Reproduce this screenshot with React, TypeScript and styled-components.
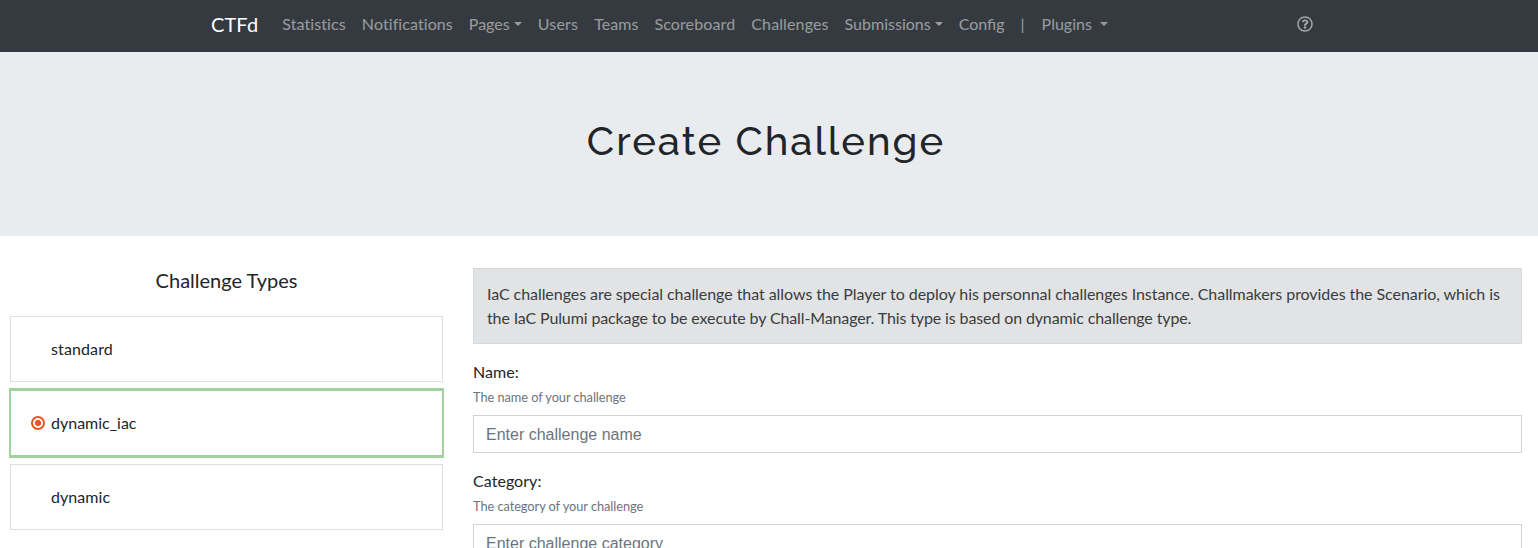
import React from "react";
import styled, { createGlobalStyle } from "styled-components";

const Global = createGlobalStyle`
  *, *::before, *::after { box-sizing: border-box; }
  html, body { margin: 0; height: 548px; overflow: hidden; }
  body { font: 400 16px/1.5 Lato, "Liberation Sans", sans-serif; color: #212529; background: #fff; }
`;
const Navbar = styled.nav`
  height: 52px; background: #343a40; padding: 0 211px 4px; display: flex; align-items: center;
`;
const Brand = styled.a`font-size: 20px; line-height: 30px; color: #fff; margin-right: 16px; letter-spacing: 0.1px;`;
const Menu = styled.ul`display: flex; list-style: none; margin: 0; padding: 0; flex: 1;`;
const Item = styled.li<{ $caret?: boolean; $track: number }>`
  padding: 0 8px; color: rgba(255,255,255,.5); white-space: pre; letter-spacing: ${p => p.$track}px;
  ${p => p.$caret && `&::after { content: ""; display: inline-block; margin-left: 4px; vertical-align: 4px; border-top: 4.8px solid; border-right: 4.8px solid transparent; border-left: 4.8px solid transparent; }`}
`;
const Help = styled.svg`width: 16px; height: 16px; margin-right: 14px; color: rgba(255,255,255,.55);`;
const Hero = styled.header`
  height: 184px; background: #e9ecef; display: flex; justify-content: center; padding: 65px 6px 0 0;
`;
const Title = styled.h1`
  margin: 0; font: 500 40px/48px Raleway, Lato, sans-serif; letter-spacing: 2px;
`;
const Columns = styled.main`display: flex; height: 312px; overflow: hidden;`;
const Types = styled.section`width: 453px; padding: 32px 10px 0;`;
const TypesTitle = styled.h5`margin: 0 0 24px; font-size: 20px; font-weight: 400; line-height: 24px; text-align: center;`;
const TypeCard = styled.label<{ $active?: boolean; $track?: number }>`
  display: flex; align-items: center; height: 66px; margin-bottom: 8px; padding-left: 20px;
  border: 1px solid rgba(0,0,0,.125); letter-spacing: ${p => p.$track ?? 0}px;
  ${p => p.$active && "border-color: #a3d39c; box-shadow: 0 0 0 1px #a3d39c, 0 -1px 0 1px #a3d39c, 0 1px 0 1px #a3d39c;"}
`;
const Radio = styled.span<{ $active?: boolean }>`
  width: 14px; height: 14px; margin-right: 6px; border-radius: 50%;
  ${p => p.$active && "border: 2px solid #e95420; background: radial-gradient(circle, #e95420 2.8px, #fff 3.4px);"}
`;
const Form = styled.form`flex: 1; padding: 32px 16px 0 20px;`;
const Alert = styled.div`
  height: 76px; padding: 13px; background: #e2e3e5; border: 1px solid #d6d8db; color: #383d41; margin-bottom: 16px;
  letter-spacing: -0.125px;
  &::first-line { letter-spacing: -0.056px; }
`;
const Field = styled.div`margin-bottom: 16px;`;
const Label = styled.label`display: block; letter-spacing: 0.05px;`;
const Hint = styled.small`
  display: block; font-size: 12.8px; line-height: 19px; color: #6c757d; margin: 4px 0 8px; letter-spacing: -0.06px;
`;
const Input = styled.input`
  display: block; width: 100%; height: 38px; padding: 7px 12px 5px; border: 1px solid #ced4da; font: 16px/24px "Liberation Sans", sans-serif;
  &::placeholder { color: #6c757d; opacity: 1; }
`;

const nav = [
  { text: "Statistics", track: 0.11 },
  { text: "Notifications", track: 0.08 },
  { text: "Pages", track: 0, caret: true },
  { text: "Users", track: 0.2 },
  { text: "Teams", track: 0.05 },
  { text: "Scoreboard", track: 0.13 },
  { text: "Challenges", track: 0.12 },
  { text: "Submissions", track: 0.01, caret: true },
  { text: "Config", track: 0 },
  { text: "|", track: 1 },
  { text: "Plugins ", track: 0, caret: true },
];
const types = [
  { name: "standard", track: 0.12 },
  { name: "dynamic_iac", active: true },
  { name: "dynamic", track: 0.05 },
];

export default function App() {
  return (
    <>
      <Global />
      <Navbar>
        <Brand>CTFd</Brand>
        <Menu>{nav.map(n => <Item key={n.text} $caret={n.caret} $track={n.track}>{n.text}</Item>)}</Menu>
        <Help viewBox="0 0 512 512" fill="currentColor">
          <path d="M256 8C119 8 8 119 8 256s111 248 248 248 248-111 248-248S393 8 256 8zm0 448c-110.500 0-200-89.500-200-200S145.500 56 256 56s200 89.500 200 200-89.500 200-200 200zm107.200-255.200c0 67.100-72.400 68.100-72.400 92.900V300c0 6.600-5.400 12-12 12h-45.600c-6.600 0-12-5.400-12-12v-8.700c0-35.700 27.100-50 47.600-61.500 17.600-9.800 28.300-16.500 28.300-29.500 0-17.200-22-28.700-39.800-28.700-23.200 0-33.900 11-49 30-4.100 5.100-11.500 6.100-16.700 2.100l-27.800-21.100c-5.100-3.900-6.300-11.100-2.600-16.400C184.800 131.500 214.900 112 261.800 112c49.100 0 101.400 38.300 101.400 88.800zM298 368c0 23.200-18.800 42-42 42s-42-18.800-42-42 18.800-42 42-42 42 18.800 42 42z" />
        </Help>
      </Navbar>
      <Hero><Title>Create Challenge</Title></Hero>
      <Columns>
        <Types>
          <TypesTitle>Challenge Types</TypesTitle>
          {types.map(t => (
            <TypeCard key={t.name} $active={t.active} $track={t.track}><Radio $active={t.active} />{t.name}</TypeCard>
          ))}
        </Types>
        <Form>
          <Alert>IaC challenges are special challenge that allows the Player to deploy his personnal challenges Instance. Challmakers provides the Scenario, which is the IaC Pulumi package to be execute by Chall-Manager. This type is based on dynamic challenge type.</Alert>
          <Field><Label>Name:</Label><Hint>The name of your challenge</Hint><Input placeholder="Enter challenge name" /></Field>
          <Field><Label>Category:</Label><Hint>The category of your challenge</Hint><Input placeholder="Enter challenge category" /></Field>
        </Form>
      </Columns>
    </>
  );
}
